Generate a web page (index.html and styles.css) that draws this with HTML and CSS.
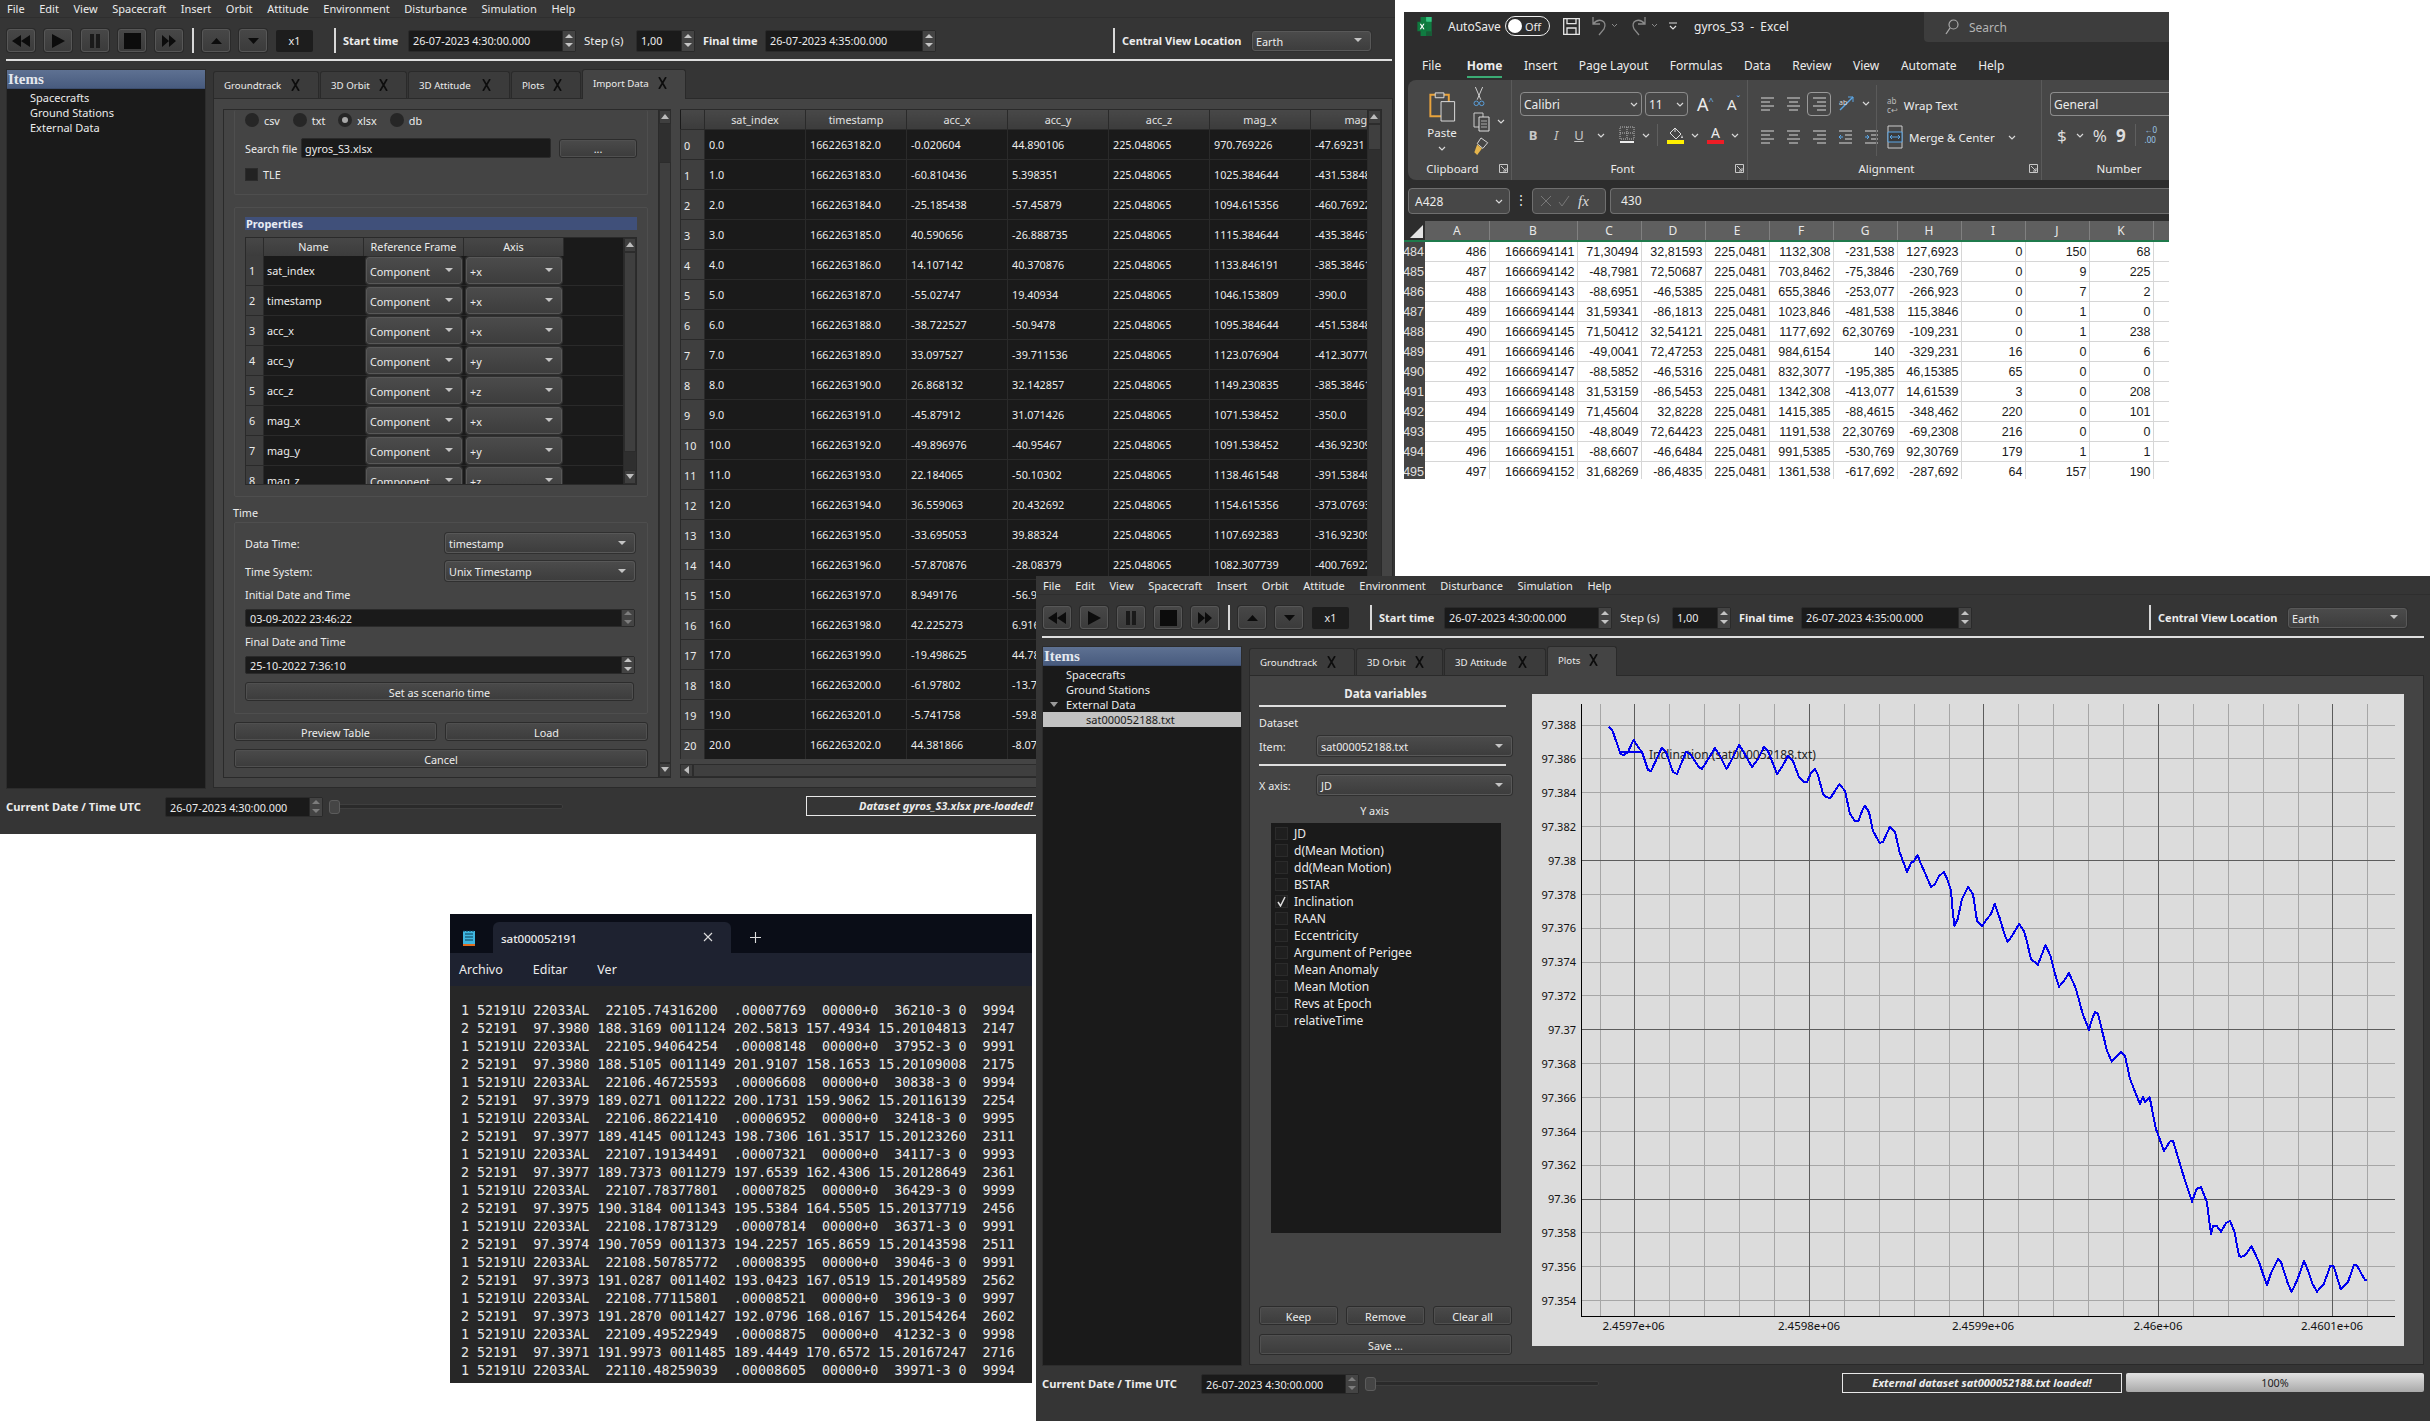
FILE: index.html
```html
<!DOCTYPE html>
<html lang="en">
<head>
<meta charset="utf-8">
<title>Satellite simulator with imported datasets</title>
<link rel="stylesheet" href="styles.css">
</head>
<body>
<svg class="sprite" aria-hidden="true">
  <symbol id="ic-rew" viewBox="0 0 18 12"><path d="M9 0v12L0 6zM18 0v12L9 6z"/></symbol>
  <symbol id="ic-play" viewBox="0 0 13 14"><path d="M0 0l13 7-13 7z"/></symbol>
  <symbol id="ic-pause" viewBox="0 0 10 14"><path d="M0 0h4v14H0zM6 0h4v14H6z"/></symbol>
  <symbol id="ic-stop" viewBox="0 0 17 16"><path d="M0 0h17v16H0z"/></symbol>
  <symbol id="ic-ff" viewBox="0 0 14 12"><path d="M0 0l7 6-7 6zM7 0l7 6-7 6z"/></symbol>
  <symbol id="ic-up" viewBox="0 0 11 6"><path d="M5.500 0L11 6H0z"/></symbol>
  <symbol id="ic-down" viewBox="0 0 11 6"><path d="M0 0h11L5.500 6z"/></symbol>
  <symbol id="ic-close" viewBox="0 0 11 12"><path d="M2 0l7 12M9 0L2 12" fill="none" stroke="#0d0d0d" stroke-width="1.700"/></symbol>
  <symbol id="ic-lines-c" viewBox="0 0 15 14"><path d="M1 1h13M3 5h9M1 9h13M3 13h9" fill="none" stroke="#d8d8d8"/></symbol>
  <symbol id="ic-lines-l" viewBox="0 0 15 14"><path d="M1 1h13M1 5h9M1 9h13M1 13h9" fill="none" stroke="#d8d8d8"/></symbol>
  <symbol id="ic-lines-r" viewBox="0 0 15 14"><path d="M1 1h13M5 5h9M1 9h13M5 13h9" fill="none" stroke="#d8d8d8"/></symbol>
  <symbol id="ic-chev" viewBox="0 0 8 5"><path d="M1 1l3 3 3-3" fill="none" stroke="#d8d8d8" stroke-width="1.200"/></symbol>
  <symbol id="ic-launch" viewBox="0 0 9 9"><path d="M.500 8.500v-8h8v8zM2 2l5 5M7 4v3H4" fill="none" stroke="#c8c8c8"/></symbol>
</svg>

<!-- Import data window -->
<section class="win win-main app">
  <nav class="menubar"><span>File</span><span>Edit</span><span>View</span><span>Spacecraft</span><span>Insert</span><span>Orbit</span><span>Attitude</span><span>Environment</span><span>Disturbance</span><span>Simulation</span><span>Help</span></nav>
  <div class="toolbar">
    <button class="tbtn"><svg class="i-rew"><use href="#ic-rew"/></svg></button>
    <button class="tbtn"><svg class="i-play"><use href="#ic-play"/></svg></button>
    <button class="tbtn"><svg class="i-pause"><use href="#ic-pause"/></svg></button>
    <button class="tbtn"><svg class="i-stop"><use href="#ic-stop"/></svg></button>
    <button class="tbtn"><svg class="i-ff"><use href="#ic-ff"/></svg></button>
    <i class="vsep"></i>
    <button class="tbtn"><svg class="i-tri"><use href="#ic-up"/></svg></button>
    <button class="tbtn"><svg class="i-tri"><use href="#ic-down"/></svg></button>
    <div class="speed">x1</div>
    <i class="vsep vsep-wide"></i>
    <b class="lb-start">Start time</b>
    <div class="spin sp-time"><span>26-07-2023 4:30:00.000</span><i class="arrows"></i></div>
    <span class="lb-step">Step (s)</span>
    <div class="spin sp-step"><span>1,00</span><i class="arrows"></i></div>
    <b class="lb-final">Final time</b>
    <div class="spin sp-final"><span>26-07-2023 4:35:00.000</span><i class="arrows"></i></div>
    <i class="vsep vsep-push"></i>
    <b class="lb-central">Central View Location</b>
    <div class="combo cb-earth"><span>Earth</span></div>
  </div>
  <div class="rule"></div>
  <div class="body">
    <aside class="tree">
      <h2 class="tree-head">Items</h2>
      <div class="tree-row">Spacecrafts</div>
      <div class="tree-row">Ground Stations</div>
      <div class="tree-row">External Data</div>
    </aside>
    <div class="tabs-wrap">
      <div class="tabbar">
        <div class="tab w-gt"><span>Groundtrack</span><svg class="i-close"><use href="#ic-close"/></svg></div>
        <div class="tab w-or"><span>3D Orbit</span><svg class="i-close"><use href="#ic-close"/></svg></div>
        <div class="tab w-at"><span>3D Attitude</span><svg class="i-close"><use href="#ic-close"/></svg></div>
        <div class="tab w-pl"><span>Plots</span><svg class="i-close"><use href="#ic-close"/></svg></div>
        <div class="tab tab-on w-im"><span>Import Data</span><svg class="i-close"><use href="#ic-close"/></svg></div>
      </div>
      <div class="pane pane-import">
        <div class="scrollarea">
          <div class="form">
            <div class="group group-file">
              <div class="radios">
                <label class="radio"><i class="dot"></i>csv</label>
                <label class="radio"><i class="dot"></i>txt</label>
                <label class="radio"><i class="dot dot-on"></i>xlsx</label>
                <label class="radio"><i class="dot"></i>db</label>
              </div>
              <div class="search-row">
                <span class="lb-search">Search file</span>
                <div class="field f-file">gyros_S3.xlsx</div>
                <button class="btn b-browse">...</button>
              </div>
              <label class="tle"><i class="chk"></i>TLE</label>
            </div>
            <div class="group group-props">
              <div class="props-bar">Properties</div>
              <div class="ptable">
                <div class="pview">
                  <div class="prow phead"><span></span><span>Name</span><span>Reference Frame</span><span>Axis</span></div>
                  <div class="prow"><span class="pnum">1</span><span class="pname">sat_index</span><div class="combo cb-cell"><span>Component</span></div><div class="combo cb-cell"><span>+x</span></div></div>
                  <div class="prow"><span class="pnum">2</span><span class="pname">timestamp</span><div class="combo cb-cell"><span>Component</span></div><div class="combo cb-cell"><span>+x</span></div></div>
                  <div class="prow"><span class="pnum">3</span><span class="pname">acc_x</span><div class="combo cb-cell"><span>Component</span></div><div class="combo cb-cell"><span>+x</span></div></div>
                  <div class="prow"><span class="pnum">4</span><span class="pname">acc_y</span><div class="combo cb-cell"><span>Component</span></div><div class="combo cb-cell"><span>+y</span></div></div>
                  <div class="prow"><span class="pnum">5</span><span class="pname">acc_z</span><div class="combo cb-cell"><span>Component</span></div><div class="combo cb-cell"><span>+z</span></div></div>
                  <div class="prow"><span class="pnum">6</span><span class="pname">mag_x</span><div class="combo cb-cell"><span>Component</span></div><div class="combo cb-cell"><span>+x</span></div></div>
                  <div class="prow"><span class="pnum">7</span><span class="pname">mag_y</span><div class="combo cb-cell"><span>Component</span></div><div class="combo cb-cell"><span>+y</span></div></div>
                  <div class="prow"><span class="pnum">8</span><span class="pname">mag_z</span><div class="combo cb-cell"><span>Component</span></div><div class="combo cb-cell"><span>+z</span></div></div>
                </div>
                <div class="vscroll vs-props"><i class="sb-btn sb-up"></i><i class="sb-gap"></i><i class="sb-thumb"></i><i class="sb-btn sb-down"></i></div>
              </div>
            </div>
            <div class="time-label">Time</div>
            <div class="group group-time">
              <div class="time-row"><span>Data Time:</span><div class="combo cb-time"><span>timestamp</span></div></div>
              <div class="time-row"><span>Time System:</span><div class="combo cb-time"><span>Unix Timestamp</span></div></div>
              <div class="time-cap">Initial Date and Time</div>
              <div class="spin sp-date"><span>03-09-2022 23:46:22</span><i class="arrows arrows-off"></i></div>
              <div class="time-cap">Final Date and Time</div>
              <div class="spin sp-date"><span>25-10-2022 7:36:10</span><i class="arrows"></i></div>
              <button class="btn b-scenario">Set as scenario time</button>
            </div>
            <div class="actions">
              <button class="btn">Preview Table</button>
              <button class="btn">Load</button>
            </div>
            <button class="btn b-cancel">Cancel</button>
          </div>
          <div class="vscroll vs-form"><i class="sb-btn sb-up"></i><i class="sb-gap"></i><i class="sb-thumb"></i><i class="sb-btn sb-down"></i></div>
        </div>
        <div class="dtable">
          <div class="dcol">
            <div class="dview">
              <table class="data">
                <colgroup><col class="c-vh"><col class="c-d"><col class="c-d"><col class="c-d"><col class="c-d"><col class="c-d"><col class="c-d"><col class="c-d"></colgroup>
                <thead><tr><th></th><th>sat_index</th><th>timestamp</th><th>acc_x</th><th>acc_y</th><th>acc_z</th><th>mag_x</th><th>mag_y</th></tr></thead>
                <tbody>
                  <tr><th>0</th><td>0.0</td><td>1662263182.0</td><td>-0.020604</td><td>44.890106</td><td>225.048065</td><td>970.769226</td><td>-47.69231</td></tr>
                  <tr><th>1</th><td>1.0</td><td>1662263183.0</td><td>-60.810436</td><td>5.398351</td><td>225.048065</td><td>1025.384644</td><td>-431.53848</td></tr>
                  <tr><th>2</th><td>2.0</td><td>1662263184.0</td><td>-25.185438</td><td>-57.45879</td><td>225.048065</td><td>1094.615356</td><td>-460.76922</td></tr>
                  <tr><th>3</th><td>3.0</td><td>1662263185.0</td><td>40.590656</td><td>-26.888735</td><td>225.048065</td><td>1115.384644</td><td>-435.38461</td></tr>
                  <tr><th>4</th><td>4.0</td><td>1662263186.0</td><td>14.107142</td><td>40.370876</td><td>225.048065</td><td>1133.846191</td><td>-385.38461</td></tr>
                  <tr><th>5</th><td>5.0</td><td>1662263187.0</td><td>-55.02747</td><td>19.40934</td><td>225.048065</td><td>1046.153809</td><td>-390.0</td></tr>
                  <tr><th>6</th><td>6.0</td><td>1662263188.0</td><td>-38.722527</td><td>-50.9478</td><td>225.048065</td><td>1095.384644</td><td>-451.53848</td></tr>
                  <tr><th>7</th><td>7.0</td><td>1662263189.0</td><td>33.097527</td><td>-39.711536</td><td>225.048065</td><td>1123.076904</td><td>-412.30770</td></tr>
                  <tr><th>8</th><td>8.0</td><td>1662263190.0</td><td>26.868132</td><td>32.142857</td><td>225.048065</td><td>1149.230835</td><td>-385.38461</td></tr>
                  <tr><th>9</th><td>9.0</td><td>1662263191.0</td><td>-45.87912</td><td>31.071426</td><td>225.048065</td><td>1071.538452</td><td>-350.0</td></tr>
                  <tr><th>10</th><td>10.0</td><td>1662263192.0</td><td>-49.896976</td><td>-40.95467</td><td>225.048065</td><td>1091.538452</td><td>-436.92309</td></tr>
                  <tr><th>11</th><td>11.0</td><td>1662263193.0</td><td>22.184065</td><td>-50.10302</td><td>225.048065</td><td>1138.461548</td><td>-391.53848</td></tr>
                  <tr><th>12</th><td>12.0</td><td>1662263194.0</td><td>36.559063</td><td>20.432692</td><td>225.048065</td><td>1154.615356</td><td>-373.07693</td></tr>
                  <tr><th>13</th><td>13.0</td><td>1662263195.0</td><td>-33.695053</td><td>39.88324</td><td>225.048065</td><td>1107.692383</td><td>-316.92309</td></tr>
                  <tr><th>14</th><td>14.0</td><td>1662263196.0</td><td>-57.870876</td><td>-28.08379</td><td>225.048065</td><td>1082.307739</td><td>-400.76922</td></tr>
                  <tr><th>15</th><td>15.0</td><td>1662263197.0</td><td>8.949176</td><td>-56.9</td></tr>
                  <tr><th>16</th><td>16.0</td><td>1662263198.0</td><td>42.225273</td><td>6.916</td></tr>
                  <tr><th>17</th><td>17.0</td><td>1662263199.0</td><td>-19.498625</td><td>44.78</td></tr>
                  <tr><th>18</th><td>18.0</td><td>1662263200.0</td><td>-61.97802</td><td>-13.7</td></tr>
                  <tr><th>19</th><td>19.0</td><td>1662263201.0</td><td>-5.741758</td><td>-59.8</td></tr>
                  <tr><th>20</th><td>20.0</td><td>1662263202.0</td><td>44.381866</td><td>-8.07</td></tr>
                </tbody>
              </table>
            </div>
            <div class="hscroll"><i class="sb-btn sb-left"></i><i class="sb-hthumb"></i></div>
          </div>
          <div class="vscroll vs-data"><i class="sb-btn sb-up"></i><i class="sb-thumb"></i><i class="sb-gap"></i></div>
        </div>
      </div>
    </div>
  </div>
  <footer class="status">
    <b class="lb-current">Current Date / Time UTC</b>
    <div class="spin sp-cur"><span>26-07-2023 4:30:00.000</span><i class="arrows arrows-off"></i></div>
    <div class="slider"><i class="slider-h"></i></div>
    <div class="notice">Dataset gyros_S3.xlsx pre-loaded!</div>
  </footer>
</section>

<!-- Spreadsheet window -->
<section class="win win-excel xl">
  <header class="xl-title">
    <svg class="xl-logo" viewBox="0 0 18 24"><path d="M4 0h14v24H4z" fill="#107c41"/><path d="M11 0h7v6h-7z" fill="#33c481"/><path d="M11 18h7v6h-7z" fill="#185c37"/><path d="M0 6h12v12H0z" fill="#0e7a3e"/><path d="M3 8.500l2 3.500-2 3.500h1.700L6 13l1.300 2.500H9L7 12l2-3.500H7.300L6 11 4.700 8.500z" fill="#fff"/></svg>
    <span class="xl-auto">AutoSave</span>
    <div class="toggle"><i class="knob"></i><span>Off</span></div>
    <svg class="xl-save" viewBox="0 0 17 17"><path d="M.700.700h15.600v15.600H.700zM4 .700v5h9v-5M4 16.300V10h9v6.300" fill="none" stroke="#e6e6e6" stroke-width="1.300"/></svg>
    <svg class="xl-undo" viewBox="0 0 30 20"><path d="M3 1v7h7M3 8c6-7 15-3 11 5l-5 6" fill="none" stroke="#8a8a8a" stroke-width="1.300"/><path d="M22 8l2.500 2.500L27 8" fill="none" stroke="#8a8a8a"/></svg>
    <svg class="xl-undo" viewBox="0 0 30 20"><path d="M15 1v7H8M15 8C9 1 0 5 4 13l5 6" fill="none" stroke="#8a8a8a" stroke-width="1.300"/><path d="M22 8l2.500 2.500L27 8" fill="none" stroke="#8a8a8a"/></svg>
    <svg class="xl-custom" viewBox="0 0 10 9"><path d="M1 1h8M2 4l3 3 3-3" fill="none" stroke="#ddd" stroke-width="1.200"/></svg>
    <span class="xl-name">gyros_S3  -  Excel</span>
    <div class="xl-search">
      <svg class="xl-glass" viewBox="0 0 14 16"><circle cx="8.500" cy="5.500" r="4.500" fill="none" stroke="#aaa" stroke-width="1.200"/><path d="M5 9l-4 6" stroke="#aaa" stroke-width="1.300"/></svg>
      <span>Search</span>
    </div>
  </header>
  <nav class="xl-tabs"><span>File</span><span class="xl-home">Home</span><span>Insert</span><span>Page Layout</span><span>Formulas</span><span>Data</span><span>Review</span><span>View</span><span>Automate</span><span>Help</span></nav>
  <div class="ribbon">
    <div class="rgroup rg-clip">
      <div class="rbody clip-body">
        <div class="paste">
          <svg class="ic-paste" viewBox="0 0 28 34"><path d="M2 6h19v22H2z" fill="none" stroke="#e8a33d" stroke-width="2"/><path d="M7 4h9v5H7z" fill="#555" stroke="#ddd"/><path d="M13 13h14v20H13z" fill="#4a4a4a" stroke="#ddd"/></svg>
          <span>Paste</span>
          <svg class="ic-chev"><use href="#ic-chev"/></svg>
        </div>
        <div class="clip-tools">
          <svg class="ic-cut" viewBox="0 0 12 22"><path d="M2 0l6 14M10 0L4 14" stroke="#ddd" fill="none"/><circle cx="3" cy="18" r="2.500" fill="none" stroke="#5aa6e6"/><circle cx="9" cy="18" r="2.500" fill="none" stroke="#5aa6e6"/></svg>
          <div class="copy-row"><svg class="ic-copy" viewBox="0 0 17 20"><path d="M1 1h9v14H1z" fill="none" stroke="#ccc"/><path d="M6 5h10v14H6z" fill="#464646" stroke="#ddd"/><path d="M8 9h6M8 12h6M8 15h6" stroke="#aaa"/></svg><svg class="ic-chev"><use href="#ic-chev"/></svg></div>
          <svg class="ic-brush" viewBox="0 0 16 20"><path d="M8 1l7 5-5 6-6-5z" fill="none" stroke="#ddd"/><path d="M4 8l5 4-5 7-3-3z" fill="#e4b44b"/></svg>
        </div>
      </div>
      <div class="rlabel rl-clip"><span>Clipboard</span><svg class="ic-launch"><use href="#ic-launch"/></svg></div>
    </div>
    <div class="rgroup rg-font">
      <div class="rbody">
        <div class="rrow rr-font1">
          <div class="xl-select xs-font"><span>Calibri</span><svg class="ic-chev"><use href="#ic-chev"/></svg></div>
          <div class="xl-select xs-size"><span>11</span><svg class="ic-chev"><use href="#ic-chev"/></svg></div>
          <span class="bigA">A<sup>^</sup></span><span class="smallA">A<sup>ˇ</sup></span>
        </div>
        <div class="rrow rr-font2">
          <b class="fmt f-b">B</b><i class="fmt f-i">I</i><u class="fmt f-u">U</u><svg class="ic-chev"><use href="#ic-chev"/></svg>
          <svg class="ic-border" viewBox="0 0 16 18"><path d="M1 1h14v12H1zM8 1v12M1 7h14" fill="none" stroke="#bbb" stroke-dasharray="1 1"/><path d="M1 16h14" stroke="#eee" stroke-width="2"/></svg><svg class="ic-chev"><use href="#ic-chev"/></svg>
          <i class="rsep"></i>
          <span class="colorbtn"><svg class="ic-fill" viewBox="0 0 16 13"><path d="M7 1l6 6-5 5-6-6zM7 1v4" fill="none" stroke="#ddd"/><path d="M14 8l1 3h-2z" fill="#ddd"/></svg><i class="bar bar-y"></i></span><svg class="ic-chev"><use href="#ic-chev"/></svg>
          <span class="colorbtn colorbtn-a"><span>A</span><i class="bar bar-r"></i></span><svg class="ic-chev"><use href="#ic-chev"/></svg>
        </div>
      </div>
      <div class="rlabel rl-font"><span>Font</span><svg class="ic-launch"><use href="#ic-launch"/></svg></div>
    </div>
    <div class="rgroup rg-align">
      <div class="rbody al-body">
        <div class="al-grid">
          <svg class="ic-al"><use href="#ic-lines-l"/></svg><svg class="ic-al"><use href="#ic-lines-c"/></svg><span class="al-on"><svg class="ic-al"><use href="#ic-lines-r"/></svg></span>
          <span class="orient"><svg class="ic-orient" viewBox="0 0 18 18"><path d="M2 15L15 2" stroke="#5aa6e6" stroke-width="1.400"/><path d="M10 2h5v5" stroke="#5aa6e6" fill="none"/><text x="1" y="10" class="orient-t">ab</text></svg><svg class="ic-chev"><use href="#ic-chev"/></svg></span>
          <svg class="ic-al"><use href="#ic-lines-l"/></svg><svg class="ic-al"><use href="#ic-lines-c"/></svg><svg class="ic-al"><use href="#ic-lines-r"/></svg>
          <span class="indents"><svg class="ic-al" viewBox="0 0 15 14"><path d="M1 1h13M7 5h7M7 9h7M1 13h13" stroke="#d8d8d8" fill="none"/><path d="M5 7H1M3 5L1 7l2 2" stroke="#5aa6e6" fill="none"/></svg><svg class="ic-al" viewBox="0 0 15 14"><path d="M1 1h13M7 5h7M7 9h7M1 13h13" stroke="#d8d8d8" fill="none"/><path d="M1 7h4M3 5l2 2-2 2" stroke="#5aa6e6" fill="none"/></svg></span>
        </div>
        <div class="al-wrap">
          <div class="wrap-row"><span class="ab-ic">ab<br>c↩</span><span>Wrap Text</span></div>
          <div class="wrap-row"><svg class="ic-merge" viewBox="0 0 16 24"><path d="M1 1h14v22H1z" fill="none" stroke="#ccc"/><path d="M1 7h14v10H1z" fill="#3a3a3a" stroke="#5aa6e6"/><path d="M3 12h10M5 10l-2 2 2 2M11 10l2 2-2 2" stroke="#5aa6e6" fill="none"/></svg><span>Merge &amp; Center</span><svg class="ic-chev"><use href="#ic-chev"/></svg></div>
        </div>
      </div>
      <div class="rlabel rl-align"><span>Alignment</span><svg class="ic-launch"><use href="#ic-launch"/></svg></div>
    </div>
    <div class="rgroup rg-num">
      <div class="rbody">
        <div class="rrow rr-font1"><div class="xl-select xs-gen"><span>General</span></div></div>
        <div class="rrow rr-num2">
          <span class="sym">$</span><svg class="ic-chev"><use href="#ic-chev"/></svg><span class="sym">%</span><b class="sym">9</b><i class="rsep"></i><span class="dec"><i>←0</i><i>.00</i></span>
        </div>
      </div>
      <div class="rlabel rl-num"><span>Number</span></div>
    </div>
  </div>
  <div class="fbar">
    <div class="namebox"><span>A428</span><svg class="ic-chev"><use href="#ic-chev"/></svg></div>
    <span class="fdots">⋮</span>
    <div class="fxbox">
      <svg class="ic-fx" viewBox="0 0 12 12"><path d="M1 1l10 10M11 1L1 11" stroke="#777" fill="none"/></svg>
      <svg class="ic-fx" viewBox="0 0 12 12"><path d="M1 7l3 4 7-10" stroke="#777" fill="none"/></svg>
      <em>fx</em>
    </div>
    <div class="finput">430</div>
  </div>
  <table class="sheet">
    <colgroup><col class="x-rh"><col class="x-a"><col class="x-b"><col class="x-n"><col class="x-n"><col class="x-n"><col class="x-n"><col class="x-n"><col class="x-n"><col class="x-n"><col class="x-n"><col class="x-n"><col class="x-l"></colgroup>
    <thead><tr><th class="corner"><i></i></th><th>A</th><th>B</th><th>C</th><th>D</th><th>E</th><th>F</th><th>G</th><th>H</th><th>I</th><th>J</th><th>K</th><th></th></tr></thead>
    <tbody>
      <tr><th>484</th><td>486</td><td>1666694141</td><td>71,30494</td><td>32,81593</td><td>225,0481</td><td>1132,308</td><td>-231,538</td><td>127,6923</td><td>0</td><td>150</td><td>68</td><td></td></tr>
      <tr><th>485</th><td>487</td><td>1666694142</td><td>-48,7981</td><td>72,50687</td><td>225,0481</td><td>703,8462</td><td>-75,3846</td><td>-230,769</td><td>0</td><td>9</td><td>225</td><td></td></tr>
      <tr><th>486</th><td>488</td><td>1666694143</td><td>-88,6951</td><td>-46,5385</td><td>225,0481</td><td>655,3846</td><td>-253,077</td><td>-266,923</td><td>0</td><td>7</td><td>2</td><td></td></tr>
      <tr><th>487</th><td>489</td><td>1666694144</td><td>31,59341</td><td>-86,1813</td><td>225,0481</td><td>1023,846</td><td>-481,538</td><td>115,3846</td><td>0</td><td>1</td><td>0</td><td></td></tr>
      <tr><th>488</th><td>490</td><td>1666694145</td><td>71,50412</td><td>32,54121</td><td>225,0481</td><td>1177,692</td><td>62,30769</td><td>-109,231</td><td>0</td><td>1</td><td>238</td><td></td></tr>
      <tr><th>489</th><td>491</td><td>1666694146</td><td>-49,0041</td><td>72,47253</td><td>225,0481</td><td>984,6154</td><td>140</td><td>-329,231</td><td>16</td><td>0</td><td>6</td><td></td></tr>
      <tr><th>490</th><td>492</td><td>1666694147</td><td>-88,5852</td><td>-46,5316</td><td>225,0481</td><td>832,3077</td><td>-195,385</td><td>46,15385</td><td>65</td><td>0</td><td>0</td><td></td></tr>
      <tr><th>491</th><td>493</td><td>1666694148</td><td>31,53159</td><td>-86,5453</td><td>225,0481</td><td>1342,308</td><td>-413,077</td><td>14,61539</td><td>3</td><td>0</td><td>208</td><td></td></tr>
      <tr><th>492</th><td>494</td><td>1666694149</td><td>71,45604</td><td>32,8228</td><td>225,0481</td><td>1415,385</td><td>-88,4615</td><td>-348,462</td><td>220</td><td>0</td><td>101</td><td></td></tr>
      <tr><th>493</th><td>495</td><td>1666694150</td><td>-48,8049</td><td>72,64423</td><td>225,0481</td><td>1191,538</td><td>22,30769</td><td>-69,2308</td><td>216</td><td>0</td><td>0</td><td></td></tr>
      <tr><th>494</th><td>496</td><td>1666694151</td><td>-88,6607</td><td>-46,6484</td><td>225,0481</td><td>991,5385</td><td>-530,769</td><td>92,30769</td><td>179</td><td>1</td><td>1</td><td></td></tr>
      <tr><th>495</th><td>497</td><td>1666694152</td><td>31,68269</td><td>-86,4835</td><td>225,0481</td><td>1361,538</td><td>-617,692</td><td>-287,692</td><td>64</td><td>157</td><td>190</td><td></td></tr>
    </tbody>
  </table>
</section>

<!-- Text editor window -->
<section class="win win-notepad pad">
  <header class="pad-title">
    <svg class="pad-logo" viewBox="0 0 12 16"><path d="M0 1h12v13H0z" fill="#3fb6e0"/><path d="M0 14h12v2H0z" fill="#e06c1f"/><path d="M2 4h8M2 7h8M2 10h8M1 0v2M4 0v2M7 0v2M10 0v2" stroke="#0b3d55"/></svg>
    <div class="pad-tab"><span>sat000052191</span><svg class="pad-x" viewBox="0 0 10 10"><path d="M1 1l8 8M9 1L1 9" stroke="#ddd" stroke-width="1.100"/></svg></div>
    <svg class="pad-plus" viewBox="0 0 11 11"><path d="M5.500 0v11M0 5.500h11" stroke="#ddd" stroke-width="1.100"/></svg>
  </header>
  <nav class="pad-menu"><span>Archivo</span><span>Editar</span><span>Ver</span></nav>
<pre class="pad-text">1 52191U 22033AL  22105.74316200  .00007769  00000+0  36210-3 0  9994
2 52191  97.3980 188.3169 0011124 202.5813 157.4934 15.20104813  2147
1 52191U 22033AL  22105.94064254  .00008148  00000+0  37952-3 0  9991
2 52191  97.3980 188.5105 0011149 201.9107 158.1653 15.20109008  2175
1 52191U 22033AL  22106.46725593  .00006608  00000+0  30838-3 0  9994
2 52191  97.3979 189.0271 0011222 200.1731 159.9062 15.20116139  2254
1 52191U 22033AL  22106.86221410  .00006952  00000+0  32418-3 0  9995
2 52191  97.3977 189.4145 0011243 198.7306 161.3517 15.20123260  2311
1 52191U 22033AL  22107.19134491  .00007321  00000+0  34117-3 0  9993
2 52191  97.3977 189.7373 0011279 197.6539 162.4306 15.20128649  2361
1 52191U 22033AL  22107.78377801  .00007825  00000+0  36429-3 0  9999
2 52191  97.3975 190.3184 0011343 195.5384 164.5505 15.20137719  2456
1 52191U 22033AL  22108.17873129  .00007814  00000+0  36371-3 0  9991
2 52191  97.3974 190.7059 0011373 194.2257 165.8659 15.20143598  2511
1 52191U 22033AL  22108.50785772  .00008395  00000+0  39046-3 0  9991
2 52191  97.3973 191.0287 0011402 193.0423 167.0519 15.20149589  2562
1 52191U 22033AL  22108.77115801  .00008521  00000+0  39619-3 0  9997
2 52191  97.3973 191.2870 0011427 192.0796 168.0167 15.20154264  2602
1 52191U 22033AL  22109.49522949  .00008875  00000+0  41232-3 0  9998
2 52191  97.3971 191.9973 0011485 189.4449 170.6572 15.20167247  2716
1 52191U 22033AL  22110.48259039  .00008605  00000+0  39971-3 0  9994</pre>
</section>

<!-- Plots window -->
<section class="win win-plots app">
  <nav class="menubar"><span>File</span><span>Edit</span><span>View</span><span>Spacecraft</span><span>Insert</span><span>Orbit</span><span>Attitude</span><span>Environment</span><span>Disturbance</span><span>Simulation</span><span>Help</span></nav>
  <div class="toolbar">
    <button class="tbtn"><svg class="i-rew"><use href="#ic-rew"/></svg></button>
    <button class="tbtn"><svg class="i-play"><use href="#ic-play"/></svg></button>
    <button class="tbtn"><svg class="i-pause"><use href="#ic-pause"/></svg></button>
    <button class="tbtn"><svg class="i-stop"><use href="#ic-stop"/></svg></button>
    <button class="tbtn"><svg class="i-ff"><use href="#ic-ff"/></svg></button>
    <i class="vsep"></i>
    <button class="tbtn"><svg class="i-tri"><use href="#ic-up"/></svg></button>
    <button class="tbtn"><svg class="i-tri"><use href="#ic-down"/></svg></button>
    <div class="speed">x1</div>
    <i class="vsep vsep-wide"></i>
    <b class="lb-start">Start time</b>
    <div class="spin sp-time"><span>26-07-2023 4:30:00.000</span><i class="arrows"></i></div>
    <span class="lb-step">Step (s)</span>
    <div class="spin sp-step"><span>1,00</span><i class="arrows"></i></div>
    <b class="lb-final">Final time</b>
    <div class="spin sp-final"><span>26-07-2023 4:35:00.000</span><i class="arrows"></i></div>
    <i class="vsep vsep-push"></i>
    <b class="lb-central">Central View Location</b>
    <div class="combo cb-earth"><span>Earth</span></div>
  </div>
  <div class="rule"></div>
  <div class="body">
    <aside class="tree">
      <h2 class="tree-head">Items</h2>
      <div class="tree-row">Spacecrafts</div>
      <div class="tree-row">Ground Stations</div>
      <div class="tree-row tree-open">External Data</div>
      <div class="tree-row tree-sel">sat000052188.txt</div>
    </aside>
    <div class="tabs-wrap">
      <div class="tabbar">
        <div class="tab w-gt"><span>Groundtrack</span><svg class="i-close"><use href="#ic-close"/></svg></div>
        <div class="tab w-or"><span>3D Orbit</span><svg class="i-close"><use href="#ic-close"/></svg></div>
        <div class="tab w-at"><span>3D Attitude</span><svg class="i-close"><use href="#ic-close"/></svg></div>
        <div class="tab tab-on w-pl"><span>Plots</span><svg class="i-close"><use href="#ic-close"/></svg></div>
      </div>
      <div class="pane pane-plots">
        <div class="side">
          <b class="side-title">Data variables</b>
          <div class="rule side-rule"></div>
          <div class="side-cap">Dataset</div>
          <div class="side-row sr-item"><span>Item:</span><div class="combo cb-side"><span>sat000052188.txt</span></div></div>
          <div class="rule side-rule2"></div>
          <div class="side-row sr-x"><span>X axis:</span><div class="combo cb-side"><span>JD</span></div></div>
          <div class="side-y">Y axis</div>
          <ul class="vars">
            <li><i class="chk"></i>JD</li>
            <li><i class="chk"></i>d(Mean Motion)</li>
            <li><i class="chk"></i>dd(Mean Motion)</li>
            <li><i class="chk"></i>BSTAR</li>
            <li><i class="chk"><svg class="tick" viewBox="0 0 9 11"><path d="M1 6l2.500 4L8 1" fill="none" stroke="#ddd" stroke-width="1.500"/></svg></i>Inclination</li>
            <li><i class="chk"></i>RAAN</li>
            <li><i class="chk"></i>Eccentricity</li>
            <li><i class="chk"></i>Argument of Perigee</li>
            <li><i class="chk"></i>Mean Anomaly</li>
            <li><i class="chk"></i>Mean Motion</li>
            <li><i class="chk"></i>Revs at Epoch</li>
            <li><i class="chk"></i>relativeTime</li>
          </ul>
          <div class="side-btns"><button class="btn">Keep</button><button class="btn">Remove</button><button class="btn">Clear all</button></div>
          <button class="btn b-save">Save ...</button>
        </div>
        <svg class="plot" viewBox="1532 695 872 652">
          <rect x="1532" y="695" width="872" height="652" fill="#dcdcdc"/>
          <path class="g-minor" d="M1581 726H2395M1581 759.900H2395M1581 793.700H2395M1581 827.600H2395M1581 895.300H2395M1581 929.200H2395M1581 963H2395M1581 996.900H2395M1581 1064.600H2395M1581 1098.400H2395M1581 1132.300H2395M1581 1166.200H2395M1581 1233.900H2395M1581 1267.800H2395M1581 1301.600H2395"/>
          <path class="g-minor" d="M1600.500 705V1317M1669 705V1317M1704 705V1317M1739 705V1317M1774 705V1317M1844 705V1317M1879 705V1317M1914 705V1317M1949 705V1317M2018 705V1317M2053 705V1317M2088 705V1317M2123 705V1317M2193 705V1317M2228 705V1317M2263 705V1317M2298 705V1317M2367.500 705V1317"/>
          <path class="g-major" d="M1581 861.500H2395M1581 1030.700H2395M1581 1200H2395M1634.500 705V1317M1809.500 705V1317M1983.500 705V1317M2158.500 705V1317M2332.500 705V1317"/>
          <path class="g-axis" d="M1581.500 705V1317.500H2395"/>
          <g class="p-ylab">
            <text x="1576" y="730">97.388</text><text x="1576" y="764">97.386</text><text x="1576" y="798">97.384</text><text x="1576" y="832">97.382</text><text x="1576" y="866">97.38</text><text x="1576" y="900">97.378</text><text x="1576" y="933">97.376</text><text x="1576" y="967">97.374</text><text x="1576" y="1001">97.372</text><text x="1576" y="1035">97.37</text><text x="1576" y="1069">97.368</text><text x="1576" y="1103">97.366</text><text x="1576" y="1137">97.364</text><text x="1576" y="1170">97.362</text><text x="1576" y="1204">97.36</text><text x="1576" y="1238">97.358</text><text x="1576" y="1272">97.356</text><text x="1576" y="1306">97.354</text>
          </g>
          <g class="p-xlab">
            <text x="1633.500" y="1331">2.4597e+06</text><text x="1809" y="1331">2.4598e+06</text><text x="1983" y="1331">2.4599e+06</text><text x="2158" y="1331">2.46e+06</text><text x="2332" y="1331">2.4601e+06</text>
          </g>
          <text class="p-legend" x="1649" y="760">Inclination (sat000052188.txt)</text>
          <polyline class="curve" points="1608.600,728 1612.600,732 1620.600,755 1624,756 1628,753 1633.600,740.700 1638,748 1642,753 1622,753 1642,753 1648,771 1651,772 1661.700,749 1666,753 1673,773 1677,775 1686,752.700 1690,755 1699,768 1702,770 1715,749 1720,756.700 1726.600,770 1732,760 1739,746 1743,752 1752,768 1758,760 1764,747.700 1768,752 1777,775 1782,768 1788,756.700 1793,762 1799,778 1803.700,783 1807,783 1811,774 1815,770 1818,776 1823,795 1826,798 1830.400,799 1835,792 1839.400,785 1845,792 1850,815 1855,822 1858.600,822 1862,812 1864.800,806.700 1869,813 1873,832 1879.600,844 1883,843 1889.800,828 1895,833 1899.600,853 1907,873 1911,864 1914,862 1917.500,856 1921,865 1924,871.700 1931,888 1935,885 1939,877 1944,873 1948,882 1951,891.700 1952.500,910 1954.500,927 1957.700,920 1962,900 1968,888 1973,895 1977,921.700 1982,927 1987,920 1991,915 1994.700,905 2000,920 2005,937 2007.700,942.700 2012,937 2019,925 2024,932 2027,943 2031,960 2038,965.700 2042,955 2045.600,946 2050.500,957 2055,975 2059,987.700 2064,982 2069,974 2076,990 2082.700,1015 2089,1030.700 2092,1020 2095,1013 2098,1015 2107,1051.700 2111.700,1062.700 2116,1058 2120.600,1053 2125,1056.700 2130,1080 2134,1090 2139.800,1105 2143,1098 2145,1102.700 2149.600,1098 2156,1130 2164,1152 2169.700,1142.700 2173,1141.700 2183,1175 2192,1202.700 2196.500,1190 2201,1188 2206.800,1203 2211,1235 2213,1226.700 2216.600,1226.700 2221,1232.700 2226,1224 2230,1222 2234.500,1233 2239,1256.700 2241,1258 2245.600,1256 2251.400,1247 2259,1263 2263,1275 2267,1286 2271,1274 2278,1260 2281,1263 2288,1285 2291.600,1292.700 2297,1281.700 2304,1262 2308,1271.700 2312.600,1285 2317,1292.700 2323.800,1285 2330.400,1266.700 2333.600,1267 2340.700,1290 2348,1283 2354,1265.700 2357,1266.700 2365,1281 2367,1281"/>
        </svg>
      </div>
    </div>
  </div>
  <footer class="status">
    <b class="lb-current">Current Date / Time UTC</b>
    <div class="spin sp-cur"><span>26-07-2023 4:30:00.000</span><i class="arrows arrows-off"></i></div>
    <div class="slider"><i class="slider-h"></i></div>
    <div class="notice">External dataset sat000052188.txt loaded!</div>
    <div class="progress">100%</div>
  </footer>
</section>
</body>
</html>
```

FILE: styles.css
```css
* { box-sizing: border-box; }
html, body { margin: 0; padding: 0; }
body { position: relative; width: 2430px; height: 1422px; overflow: hidden; background: #fff; }
.sprite { position: absolute; width: 0; height: 0; }

.win { position: absolute; overflow: hidden; }
.win-main { left: 0; top: 0; width: 1395px; height: 834px; }
.win-excel { left: 1404px; top: 12px; width: 765px; height: 467px; }
.win-notepad { left: 450px; top: 914px; width: 582px; height: 469px; }
.win-plots { left: 1036px; top: 576px; width: 1394px; height: 845px; }

/* Dark Qt application */
.app { display: flex; flex-direction: column; background: #353535; color: #ececec; font: 10.8px "Noto Sans", sans-serif; }
.app button { font: inherit; color: inherit; }
.menubar { flex: none; height: 18px; display: flex; align-items: center; gap: 14.600px; padding-left: 7px; border-bottom: 1px solid #2e2e2e; font-size: 11px; }
.win-plots .menubar { height: 19px; padding-top: 1px; }
.toolbar { flex: none; height: 41px; padding: 4px 0 0 7px; display: flex; align-items: center; }
.tbtn { width: 28px; height: 23px; margin-right: 9px; padding: 0; display: flex; align-items: center; justify-content: center; background: linear-gradient(#474747, #3b3b3b); border: 1px solid #575757; border-radius: 3px; box-shadow: 0 0 0 1px #2a2a2a; }
.tbtn svg { display: block; fill: #0c0c0c; }
.i-rew { width: 18px; height: 12px; }
.i-play { width: 13px; height: 14px; }
.i-pause { width: 10px; height: 14px; fill: #1a1a1a !important; }
.i-stop { width: 17px; height: 16px; }
.i-ff { width: 14px; height: 12px; }
.i-tri { width: 11px; height: 6px; }
.vsep { width: 2px; height: 25px; background: #d8d8d8; margin-right: 8px; flex: none; }
.speed { width: 37px; height: 22px; margin-right: 21px; display: flex; align-items: center; justify-content: center; background: #1d1d1d; border-radius: 2px; }
.vsep-wide { margin-right: 7px; }
.vsep-push { margin-left: 177px; margin-right: 7px; }
.lb-start { width: 65px; font-size: 11px; }
.lb-step { width: 52px; margin-left: 8px; font-size: 11.500px; }
.lb-final { width: 62px; margin-left: 8px; font-size: 11px; }
.lb-central { width: 130px; font-size: 11px; }

.spin { display: flex; align-items: center; padding-left: 4px; background: #1a1a1a; border: 1px solid #2a2a2a; border-radius: 2px; white-space: nowrap; }
.spin > span { flex: 1; }
.arrows { flex: none; align-self: stretch; width: 13px; background: #444; position: relative; border-left: 1px solid #2a2a2a; }
.arrows::before, .arrows::after { content: ""; position: absolute; left: 2px; border: 4px solid transparent; border-top-width: 0; border-bottom: 4px solid #c4c4c4; }
.arrows::before { top: calc(50% - 7px); }
.arrows::after { top: calc(50% + 2px); transform: scaleY(-1); }
.arrows-off::before, .arrows-off::after { opacity: .45; }
.sp-time { width: 168px; height: 22px; }
.sp-step { width: 59px; height: 22px; }
.sp-final { width: 171px; height: 22px; }

.combo { display: flex; align-items: center; justify-content: space-between; padding: 1px 8px 0 3px; background: linear-gradient(#4b4b4b, #3d3d3d); border: 1px solid #585858; border-radius: 3px; box-shadow: 0 0 0 1px #303030; white-space: nowrap; }
.combo::after { content: ""; margin-top: -2px; border: 4px solid transparent; border-top: 4px solid #c4c4c4; border-bottom-width: 0; }
.cb-earth { width: 119px; height: 20px; }
.rule { flex: none; height: 2px; margin: 0 3px 0 6px; background: #dedede; }
.win-plots .rule { margin-right: 6px; }

.body { flex: none; height: 720px; margin: 8px 2px 0 6px; display: flex; gap: 7px; }
.win-plots .body { margin-right: 6px; }
.tree { flex: none; width: 200px; background: #1a1a1a; border: 1px solid #2c2c2c; }
.tree-head { margin: 0; height: 19px; padding-left: 1px; background: linear-gradient(#5e7192, #485b7e); border-bottom: 1px solid #3c4d6e; font: bold 15px/18px "Liberation Serif", serif; color: #e4e8ee; }
.tree-row { height: 15px; line-height: 15px; padding-left: 23px; position: relative; font-size: 11px; white-space: nowrap; }
.tree-row:nth-child(2) { margin-top: 1px; }
.tree-open::before { content: ""; position: absolute; left: 7px; top: 5px; border: 4px solid transparent; border-top: 5px solid #9a9a9a; border-bottom-width: 0; }
.tree-sel { padding-left: 43px; background: #c2c2c2; color: #1a1a1a; }

.tabs-wrap { flex: 1; min-width: 0; display: flex; flex-direction: column; }
.tabbar { flex: none; height: 29px; display: flex; align-items: flex-end; gap: 1px; position: relative; z-index: 1; }
.tab { height: 27px; display: flex; align-items: center; justify-content: space-between; padding: 0 17px 0 10px; background: #3b3b3b; border: 1px solid #2a2a2a; border-bottom: 0; border-radius: 3px 3px 0 0; font-size: 9.700px; white-space: nowrap; }
.tab-on { height: 30px; margin-bottom: -1px; background: #444; padding-bottom: 3px; }
.i-close { width: 11px; height: 12px; display: block; }
.w-gt { width: 106px; } .w-or { width: 87px; } .w-at { width: 102px; } .w-pl { width: 70px; } .w-im { width: 104px; }
.pane { flex: none; height: 690px; background: #444; border: 1px solid #2a2a2a; display: flex; }
.pane-import { padding: 10px 11px 9px 9px; gap: 9px; }
.pane-plots { padding: 9px 19px 9px 9px; gap: 20px; }

/* Import form */
.scrollarea { flex: none; width: 448px; display: flex; border: 1px solid #2a2a2a; }
.form { width: 434px; padding: 0 10px; display: flex; flex-direction: column; flex: none; }
.group { flex: none; width: 414px; border: 1px solid #4e4e4e; border-radius: 2px; padding: 0 10px; }
.group-file { height: 85px; border-top: 0; display: flex; flex-direction: column; }
.radios { display: flex; gap: 13px; margin-top: 3px; height: 14px; }
.radio { display: flex; align-items: center; gap: 5px; }
.dot { width: 14px; height: 14px; border-radius: 50%; background: #262626; position: relative; display: block; }
.dot-on::after { content: ""; position: absolute; left: 4px; top: 4px; width: 6px; height: 6px; border-radius: 50%; background: #a8a8a8; }
.search-row { display: flex; align-items: center; margin-top: 11px; height: 20px; }
.lb-search { width: 56px; }
.field { height: 20px; width: 250px; padding-left: 3px; line-height: 19px; background: #1a1a1a; border: 1px solid #2a2a2a; border-radius: 2px; }
.f-file { margin-right: 8px; }
.btn { height: 19px; padding: 1px 0 0; background: linear-gradient(#4a4a4a, #3c3c3c); border: 1px solid #2c2c2c; border-radius: 3px; box-shadow: inset 0 0 0 1px #505050; }
.b-browse { width: 78px; }
.tle { display: flex; align-items: center; gap: 5px; margin-top: 9px; }
.chk { flex: none; display: flex; align-items: center; justify-content: center; width: 13px; height: 13px; background: #222; border: 1px solid #2b2b2b; }
.tick { width: 9px; height: 11px; }
.group-props { height: 290px; margin-top: 12px; padding: 9px 10px 0; }
.props-bar { height: 13px; padding-left: 1px; line-height: 13px; background: #40507a; font-weight: 700; color: #e8ecf4; font-size: 11px; }
.ptable { height: 248px; margin-top: 7px; display: flex; border: 1px solid #2a2a2a; }
.pview { flex: 1; overflow: hidden; background: #1a1a1a; }
.prow { display: grid; grid-template-columns: 18px 100px 100px 100px; height: 30px; align-items: center; border-bottom: 1px solid #2a2a2a; }
.prow > .combo { width: 96px; height: 27px; justify-self: center; }
.phead { height: 18px; background: #3c3c3c; border-bottom: 0; width: 318px; }
.phead span { height: 18px; line-height: 18px; text-align: center; background: linear-gradient(#474747, #3c3c3c); border-right: 1px solid #2b2b2b; }
.pnum { height: 29px; line-height: 29px; padding-left: 3px; background: #3d3d3d; border-right: 1px solid #2a2a2a; }
.pname { padding-left: 3px; }
.time-label { flex: none; margin: 8px 0 1px -1px; height: 16px; line-height: 16px; }
.group-time { height: 192px; padding: 10px 12px 0 10px; }
.time-row { display: flex; align-items: center; justify-content: space-between; height: 20px; margin-bottom: 8px; }
.cb-time { width: 190px; height: 20px; }
.time-cap { height: 14px; line-height: 14px; margin: 0 0 7px; }
.time-row + .time-cap { margin-top: -1px; }
.sp-date { width: 390px; height: 18px; margin-bottom: 8px; padding-left: 4px; }
.b-scenario { width: 389px; margin-top: 1px; display: block; }
.actions { flex: none; display: flex; gap: 8px; margin-top: 8px; }
.actions .btn { flex: 1; }
.b-cancel { flex: none; margin-top: 8px; width: 414px; }

/* Scrollbars */
.vscroll { flex: none; width: 13px; background: #2f2f2f; display: flex; flex-direction: column; border-left: 1px solid #2a2a2a; }
.sb-btn { display: block; flex: none; height: 14px; background: #3f3f3f; position: relative; border: 1px solid #2c2c2c; }
.sb-up::after, .sb-down::after { content: ""; position: absolute; left: 1px; top: 3px; border: 4px solid transparent; border-top-width: 0; border-bottom: 5px solid #bdbdbd; }
.sb-down::after { border-bottom-width: 0; border-top: 5px solid #bdbdbd; border-top-style: solid; }
.sb-left::after { content: ""; position: absolute; left: 3px; top: 1px; border: 4px solid transparent; border-left-width: 0; border-right: 5px solid #bdbdbd; }
.sb-gap { display: block; flex: none; }
.sb-thumb { display: block; flex: 1; min-height: 0; background: #3f3f3f; border: 1px solid #2c2c2c; }
.vs-form { width: 13px; }
.vs-form .sb-gap { height: 38px; }
.vs-props .sb-gap { height: 0; }
.vs-props .sb-thumb { margin-bottom: 18px; }
.vs-data { width: 14px; }
.vs-data .sb-thumb { flex: none; height: 26px; }
.vs-data .sb-gap { flex: 1; }

/* Data preview table */
.dtable { flex: none; width: 702px; display: flex; border: 1px solid #2a2a2a; border-left: 0; }
.dcol { flex: 1; min-width: 0; display: flex; flex-direction: column; }
.dview { flex: 1; min-height: 0; overflow: hidden; background: #1a1a1a; }
.data { border-collapse: collapse; table-layout: fixed; width: 731px; }
.c-vh { width: 24px; }
.c-d { width: 101px; }
.data thead th { height: 19px; font-weight: 400; text-align: center; background: linear-gradient(#484848, #3c3c3c); border-right: 1px solid #2a2a2a; border-bottom: 1px solid #2a2a2a; color: #e2e2e2; }
.data tbody th { height: 30px; padding: 3px 0 0 3px; font-weight: 400; text-align: left; background: #3f3f3f; border: 1px solid #2a2a2a; }
.data td { height: 30px; padding: 0 4px; white-space: nowrap; overflow: hidden; border: 1px solid #2a2a2a; background: #1a1a1a; }
.hscroll { flex: none; height: 13px; margin-top: 5px; display: flex; background: #2f2f2f; }
.hscroll .sb-btn { width: 13px; height: 13px; }
.sb-hthumb { display: block; flex: 1; background: #3f3f3f; border: 1px solid #2c2c2c; }

/* Status bars */
.status { flex: 1; display: flex; align-items: flex-start; padding: 7px 0 0 6px; }
.lb-current { width: 159px; margin-top: 1px; font-size: 11.200px; line-height: 20px; white-space: nowrap; }
.sp-cur { width: 158px; height: 20px; margin-top: 1px; }
.slider { width: 234px; height: 5px; margin: 8px 243px 0 6px; background: #2a2a2a; border: 1px solid #3e3e3e; border-radius: 2px; position: relative; }
.slider-h { position: absolute; left: -1px; top: -5px; width: 11px; height: 14px; background: #454545; border: 1px solid #5c5c5c; border-radius: 3px; }
.notice { flex: none; width: 280px; height: 20px; border: 1px solid #e8e8e8; font-weight: 700; font-style: italic; text-align: center; line-height: 18px; font-size: 11px; white-space: nowrap; overflow: hidden; }
.progress { flex: none; width: 298px; height: 19px; margin-left: 4px; background: linear-gradient(#e2e2e2, #a9a9a9); border-radius: 2px; color: #1c1c1c; text-align: center; line-height: 19px; }

/* Plots side panel */
.side { flex: none; width: 253px; display: flex; flex-direction: column; }
.side-title { height: 14px; margin-top: 2px; line-height: 14px; text-align: center; font-size: 11.500px; }
.side-rule { margin: 4px 0 0; }
.side-cap { height: 14px; line-height: 14px; margin-top: 9px; margin-bottom: -1px; }
.side-row { display: flex; align-items: center; justify-content: space-between; height: 20px; }
.sr-item { margin-top: 7px; }
.side-rule2 { margin: 8px 0 0; }
.sr-x { margin-top: 9px; }
.cb-side { width: 195px; height: 20px; }
.side-y { height: 14px; line-height: 14px; margin-top: 9px; margin-bottom: -1px; padding-right: 22px; text-align: center; }
.vars { list-style: none; margin: 6px 0 0 12px; padding: 2px 0 0 4px; width: 230px; height: 410px; background: #1a1a1a; font-size: 12px; }
.vars li { height: 17px; display: flex; align-items: center; gap: 6px; white-space: nowrap; }
.vars .chk { background: #1f1f1f; }
.side-btns { margin-top: auto; display: flex; gap: 8px; }
.side-btns .btn { flex: 1; }
.b-save { flex: none; height: 21px; margin-top: 9px; }

/* Plot */
.plot { flex: none; width: 872px; height: 652px; margin-top: 9px; display: block; }
.g-minor { stroke: #a6a6a6; stroke-width: 1; fill: none; shape-rendering: crispEdges; }
.g-major { stroke: #5c5c5c; stroke-width: 1; fill: none; shape-rendering: crispEdges; }
.g-axis { stroke: #000; stroke-width: 1; fill: none; shape-rendering: crispEdges; }
.p-ylab text { font: 11px "Noto Sans", sans-serif; text-anchor: end; fill: #111; }
.p-xlab text { font: 11.500px "Noto Sans", sans-serif; text-anchor: middle; fill: #111; }
.p-legend { font: 12px "Noto Sans", sans-serif; fill: #222; }
.curve { fill: none; stroke: #0000f0; stroke-width: 2; stroke-linejoin: round; shape-rendering: crispEdges; }

/* Excel */
.xl { display: flex; flex-direction: column; background: #2d2d2d; color: #ececec; font: 12px "Noto Sans", sans-serif; }
.xl-title { flex: none; height: 34px; display: flex; align-items: center; padding: 0 0 6px 12px; }
.xl-logo { width: 17px; height: 19px; flex: none; }
.xl-auto { margin-left: 15px; width: 57px; }
.toggle { width: 45px; height: 20px; border: 1px solid #eee; border-radius: 10px; display: flex; align-items: center; padding-left: 2px; gap: 3px; font-size: 11px; }
.knob { width: 14px; height: 14px; border-radius: 50%; background: #fff; }
.xl-save { width: 17px; height: 17px; margin-left: 13px; }
.xl-undo { width: 30px; height: 20px; margin-left: 10px; }
.xl-custom { width: 10px; height: 9px; margin-left: 8px; }
.xl-name { margin-left: 16px; width: 230px; white-space: pre; }
.xl-search { flex: 1; height: 30px; align-self: flex-start; display: flex; align-items: center; gap: 10px; padding-left: 21px; background: #3d3d3d; border-radius: 0 0 0 4px; color: #b4b4b4; }
.xl-glass { width: 14px; height: 16px; }
.xl-tabs { flex: none; height: 34px; display: flex; align-items: flex-start; gap: 21.600px; padding: 11px 0 0 18px; }
.xl-home { margin-left: 4px; font-weight: 700; padding-bottom: 2px; border-bottom: 2px solid #3bab74; }
.ribbon { flex: none; height: 100px; margin-left: 4px; display: flex; background: #474747; border-radius: 8px 0 0 8px; }
.rgroup { flex: none; display: flex; flex-direction: column; border-right: 1px solid #5a5a5a; }
.rg-clip { width: 104px; } .rg-font { width: 236px; } .rg-align { width: 294px; } .rg-num { flex: 1; border-right: 0; }
.rbody { flex: 1; min-height: 0; }
.rlabel { flex: none; height: 24px; display: flex; align-items: center; justify-content: center; position: relative; font-size: 11.500px; }
.rl-clip, .rl-font { padding-right: 14px; }
.rl-align { padding-right: 16px; }
.rl-num { padding-left: 16px; }
.ic-launch { position: absolute; right: 3px; top: 8px; width: 9px; height: 9px; }
.ic-chev { width: 8px; height: 5px; flex: none; }
.clip-body { display: flex; }
.paste { width: 65px; display: flex; flex-direction: column; align-items: center; padding: 9px 0 0 3px; font-size: 11.500px; }
.ic-paste { width: 28px; height: 33px; margin-bottom: 3px; }
.paste .ic-chev { margin-top: 6px; }
.clip-tools { display: flex; flex-direction: column; gap: 5px; padding-top: 7px; }
.ic-cut { width: 12px; height: 21px; }
.copy-row { display: flex; align-items: center; gap: 7px; }
.ic-copy { width: 17px; height: 20px; }
.ic-brush { width: 16px; height: 20px; }
.rrow { display: flex; align-items: center; }
.rr-font1 { height: 24px; margin-top: 12px; padding-left: 8px; gap: 3px; }
.xl-select { height: 24px; display: flex; align-items: center; justify-content: space-between; padding: 0 3px; border: 1px solid #8c8c8c; border-radius: 4px; background: #474747; }
.xs-font { width: 122px; }
.xs-size { width: 43px; margin-right: 6px; }
.xs-gen { width: 130px; border-right: 0; flex: none; }
.bigA { font-size: 18px; width: 27px; line-height: 1; }
.smallA { font-size: 15px; line-height: 1; }
.bigA sup, .smallA sup { font-size: 9px; color: #6db3ef; vertical-align: 7px; line-height: 0; }
.rr-font2 { height: 28px; margin-top: 5px; padding-left: 16px; gap: 7px; }
.fmt { width: 10px; text-align: center; font-size: 13px; margin-right: 6px; color: #c8c8c8; }
.ic-border { width: 16px; height: 18px; margin-left: 7px; }
.rsep { width: 1px; height: 22px; background: #5f5f5f; flex: none; }
.colorbtn { display: flex; flex-direction: column; align-items: center; width: 17px; margin-left: 2px; }
.colorbtn-a { margin-left: 1px; line-height: 14px; font-size: 14px; }
.ic-fill { width: 16px; height: 13px; }
.bar { display: block; width: 17px; height: 4px; }
.bar-y { background: #ffef00; }
.bar-r { background: #ee1c25; }
.al-body { display: flex; }
.al-grid { width: 128px; display: grid; grid-template-columns: repeat(3, 26px) 1fr; grid-auto-rows: 33px; align-items: center; padding: 7px 0 0 12px; }
.ic-al { width: 15px; height: 14px; display: block; }
.al-on { width: 24px; height: 24px; margin-left: -5px; padding: 4px; border: 1px solid #9a9a9a; border-radius: 4px; }
.orient { display: flex; align-items: center; gap: 6px; }
.ic-orient { width: 18px; height: 18px; }
.orient-t { font: 7px "Noto Sans", sans-serif; fill: #ddd; }
.indents { display: flex; gap: 11px; }
.al-wrap { display: flex; flex-direction: column; gap: 8px; padding: 8px 0 0 10px; border-left: 1px solid #5a5a5a; margin: 5px 0 0 0; font-size: 11.500px; }
.wrap-row { height: 24px; display: flex; align-items: center; gap: 6px; white-space: nowrap; }
.ab-ic { font-size: 8px; line-height: 9px; color: #bbb; }
.ic-merge { width: 16px; height: 24px; }
.wrap-row .ic-chev { margin-left: 7px; }
.rr-num2 { height: 28px; margin-top: 5px; padding-left: 15px; gap: 9px; }
.sym { font-size: 17px; color: #ddd; }
.dec { display: flex; flex-direction: column; font-size: 8px; line-height: 10px; color: #9cc7ea; }
.dec i { font-style: normal; }
.fbar { flex: none; height: 26px; margin: 8px 0 7px 4px; display: flex; align-items: stretch; gap: 4px; }
.namebox { width: 102px; display: flex; align-items: center; justify-content: space-between; padding: 0 6px; border: 1px solid #6f6f6f; border-radius: 4px; background: #474747; }
.fdots { width: 14px; text-align: center; line-height: 24px; }
.fxbox { width: 74px; display: flex; align-items: center; gap: 6px; padding: 0 5px 0 7px; border: 1px solid #6f6f6f; border-radius: 4px; background: #474747; }
.ic-fx { width: 12px; height: 12px; }
.fxbox em { font: italic 15px "Liberation Serif", serif; color: #ddd; margin-left: 2px; }
.finput { flex: 1; padding-left: 10px; line-height: 24px; border: 1px solid #6f6f6f; border-right: 0; border-radius: 4px 0 0 4px; background: #474747; }
.sheet { border-collapse: collapse; table-layout: fixed; width: 765px; font: 12.500px "Liberation Sans", sans-serif; }
.x-rh { width: 21px; } .x-a { width: 64px; } .x-b { width: 88px; } .x-n { width: 64px; } .x-l { width: 16px; }
.sheet thead th { height: 20px; background: #5f5f5f; border-right: 1px solid #808080; border-bottom: 2px solid #1f7a4c; color: #e8e8e8; font: 400 12px "Noto Sans", sans-serif; }
.sheet thead .corner { background: #2d2d2d; border-right: 0; position: relative; }
.corner i { position: absolute; right: 2px; bottom: 2px; border-style: solid; border-width: 0 0 13px 13px; border-color: transparent transparent #e4e4e4 transparent; }
.sheet tbody th { height: 20px; padding: 1px 1px 0 0; background: #444; color: #e0e0e0; font-weight: 400; direction: rtl; overflow: hidden; white-space: nowrap; font-size: 12.500px; }
.sheet td { height: 20px; padding: 1px 2px 0 0; text-align: right; background: #fff; color: #1a1a1a; border-right: 1px solid #d6d6d6; border-bottom: 1px solid #d6d6d6; white-space: nowrap; overflow: hidden; }

/* Notepad */
.pad { display: flex; flex-direction: column; background: #272727; color: #ececec; font: 13px "Noto Sans", sans-serif; }
.pad-title { flex: none; height: 39px; display: flex; align-items: flex-end; background: #0a0d17; padding-left: 13px; }
.pad-logo { width: 12px; height: 16px; margin-bottom: 7px; }
.pad-tab { width: 238px; height: 31px; margin-left: 18px; display: flex; align-items: center; justify-content: space-between; padding: 1px 18px 0 8px; background: #1e2230; border-radius: 6px 6px 0 0; font-weight: 500; font-size: 11.500px; }
.pad-x { width: 10px; height: 10px; margin-bottom: 3px; }
.pad-plus { width: 11px; height: 11px; margin: 0 0 10px 19px; }
.pad-menu { flex: none; height: 33px; display: flex; align-items: center; gap: 30px; padding-left: 9px; background: #1e2230; font-size: 12.500px; }
.pad-text { flex: 1; margin: 0; padding: 16px 0 0 11px; font: 13.330px/18px "DejaVu Sans Mono", monospace; color: #e8e8e8; background: #272727; white-space: pre; overflow: hidden; }
```
